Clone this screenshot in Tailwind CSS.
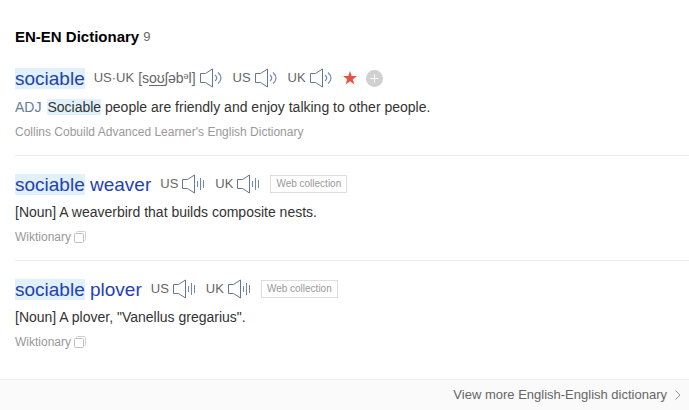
<!DOCTYPE html>
<html lang="en">
<head>
<meta charset="utf-8">
<meta name="viewport" content="width=device-width, initial-scale=1">
<title>EN-EN Dictionary</title>
<script src="https://cdn.jsdelivr.net/npm/@tailwindcss/browser@4"></script>
</head>
<body class="bg-white font-['Liberation_Sans',Arial,sans-serif] text-sm text-[#333]">
<svg class="hidden" aria-hidden="true">
  <symbol id="wave" viewBox="0 0 24 20">
    <path d="M5.500 5.500H.5V14.500H5.500M5.500 5.500L12.500 1V19L5.500 14.500" fill="none" stroke="#66768f"/>
    <path d="M15 7Q18.500 10 15 13M18 4.500Q24 10 18 15.500" fill="none" stroke="#7088b5" stroke-width="1.200"/>
  </symbol>
  <symbol id="bars" viewBox="0 0 24 20">
    <path d="M5.500 5.500H.5V14.500H5.500M5.500 5.500L12.500 1V19L5.500 14.500" fill="none" stroke="#66768f"/>
    <path d="M15.500 7V13M18.500 4V16M21.500 6V14" fill="none" stroke="#7088b5"/>
  </symbol>
  <symbol id="copy" viewBox="0 0 12 12">
    <path d="M2.500 2.500V1.500Q2.500 .5 3.500 .5H10.500Q11.500 .5 11.500 1.500V8.500Q11.500 9.500 10.500 9.500H9.500" fill="none" stroke="#d0d0d0"/>
    <rect x=".5" y="2.500" width="9" height="9" rx="1" fill="none" stroke="#c0c0c0"/>
  </symbol>
</svg>
<main>
  <h2 class="flex h-[50px] items-center pt-6 pl-[15px] text-[15px] font-bold text-black">EN-EN Dictionary<span class="ml-1 text-[13px] font-normal text-[#666]">9</span></h2>
  <div class="pl-[15px]">
    <article class="border-b border-[#e9e9e9] pt-3.5 pb-3">
      <div class="flex h-7 items-center gap-[9px] text-[13px] text-[#666]">
        <a href="#" class="text-[19px] leading-[21px] text-[#2440b3]"><mark class="bg-[#e0f1fc] text-inherit">sociable</mark></a>
        <span class="flex items-center gap-1"><span>US·UK</span><span class="text-sm whitespace-nowrap">[s<u class="underline-offset-2">oʊ</u>ʃəb<sup class="text-[9px]">ə</sup>l]</span><button type="button" aria-label="Play pronunciation"><svg class="h-5 w-6"><use href="#wave"/></svg></button></span>
        <span class="flex items-center gap-1">US<button type="button" aria-label="Play US pronunciation"><svg class="h-5 w-6"><use href="#wave"/></svg></button></span>
        <span class="flex items-center gap-1">UK<button type="button" aria-label="Play UK pronunciation"><svg class="h-5 w-6"><use href="#wave"/></svg></button></span>
        <svg class="size-3.5" viewBox="0 0 14 14" role="img" aria-label="Core word"><path d="M7 0L8.700 5H14L9.800 8.200L11.300 13.500L7 10.300L2.700 13.500L4.200 8.200L0 5H5.300Z" fill="#e4533f"/></svg>
        <button type="button" aria-label="Add to word list"><svg class="size-[17px]" viewBox="0 0 17 17"><circle cx="8.500" cy="8.500" r="8.500" fill="#d0d0d0"/><path d="M4.500 8.500H12.500M8.500 4.500V12.500" stroke="#fff"/></svg></button>
      </div>
      <p class="mt-px leading-7"><span class="mr-1.5 text-[#687b9c]">ADJ</span><mark class="bg-[#e0f1fc] text-inherit">Sociable</mark> people are friendly and enjoy talking to other people.</p>
      <p class="text-xs leading-[22px] text-[#999]">Collins Cobuild Advanced Learner's English Dictionary</p>
    </article>
    <article class="border-b border-[#e9e9e9] pt-3.5 pb-3">
      <div class="flex h-7 items-center gap-[9px] text-[13px] text-[#666]">
        <a href="#" class="text-[19px] leading-[21px] text-[#2440b3]"><mark class="bg-[#e0f1fc] text-inherit">sociable</mark> weaver</a>
        <span class="flex items-center gap-1">US<button type="button" aria-label="Play US pronunciation"><svg class="h-5 w-6"><use href="#bars"/></svg></button></span>
        <span class="flex items-center gap-1">UK<button type="button" aria-label="Play UK pronunciation"><svg class="h-5 w-6"><use href="#bars"/></svg></button></span>
        <span class="border border-[#ddd] px-[5px] text-[10px] leading-4 text-[#999]">Web collection</span>
      </div>
      <p class="leading-7">[Noun] A weaverbird that builds composite nests.</p>
      <p class="flex items-center gap-[3px] text-xs leading-[22px] text-[#999]">Wiktionary<svg class="size-3" aria-hidden="true"><use href="#copy"/></svg></p>
    </article>
    <article class="pt-3.5 pb-[26px]">
      <div class="flex h-7 items-center gap-[9px] text-[13px] text-[#666]">
        <a href="#" class="text-[19px] leading-[21px] text-[#2440b3]"><mark class="bg-[#e0f1fc] text-inherit">sociable</mark> plover</a>
        <span class="flex items-center gap-1">US<button type="button" aria-label="Play US pronunciation"><svg class="h-5 w-6"><use href="#bars"/></svg></button></span>
        <span class="flex items-center gap-1">UK<button type="button" aria-label="Play UK pronunciation"><svg class="h-5 w-6"><use href="#bars"/></svg></button></span>
        <span class="border border-[#ddd] px-[5px] text-[10px] leading-4 text-[#999]">Web collection</span>
      </div>
      <p class="leading-7">[Noun] A plover, "Vanellus gregarius".</p>
      <p class="flex items-center gap-[3px] text-xs leading-[22px] text-[#999]">Wiktionary<svg class="size-3" aria-hidden="true"><use href="#copy"/></svg></p>
    </article>
  </div>
  <a href="#" class="flex items-center justify-end gap-2 border-t border-[#f0f0f0] bg-[#fafafa] pr-2 text-[13px] leading-[30px] text-[#666]">View more English-English dictionary<svg class="h-3 w-1.5" viewBox="0 0 6 12" aria-hidden="true"><path d="M.5 1.500L5 6L.5 10.500" fill="none" stroke="#999"/></svg></a>
</main>
</body>
</html>
